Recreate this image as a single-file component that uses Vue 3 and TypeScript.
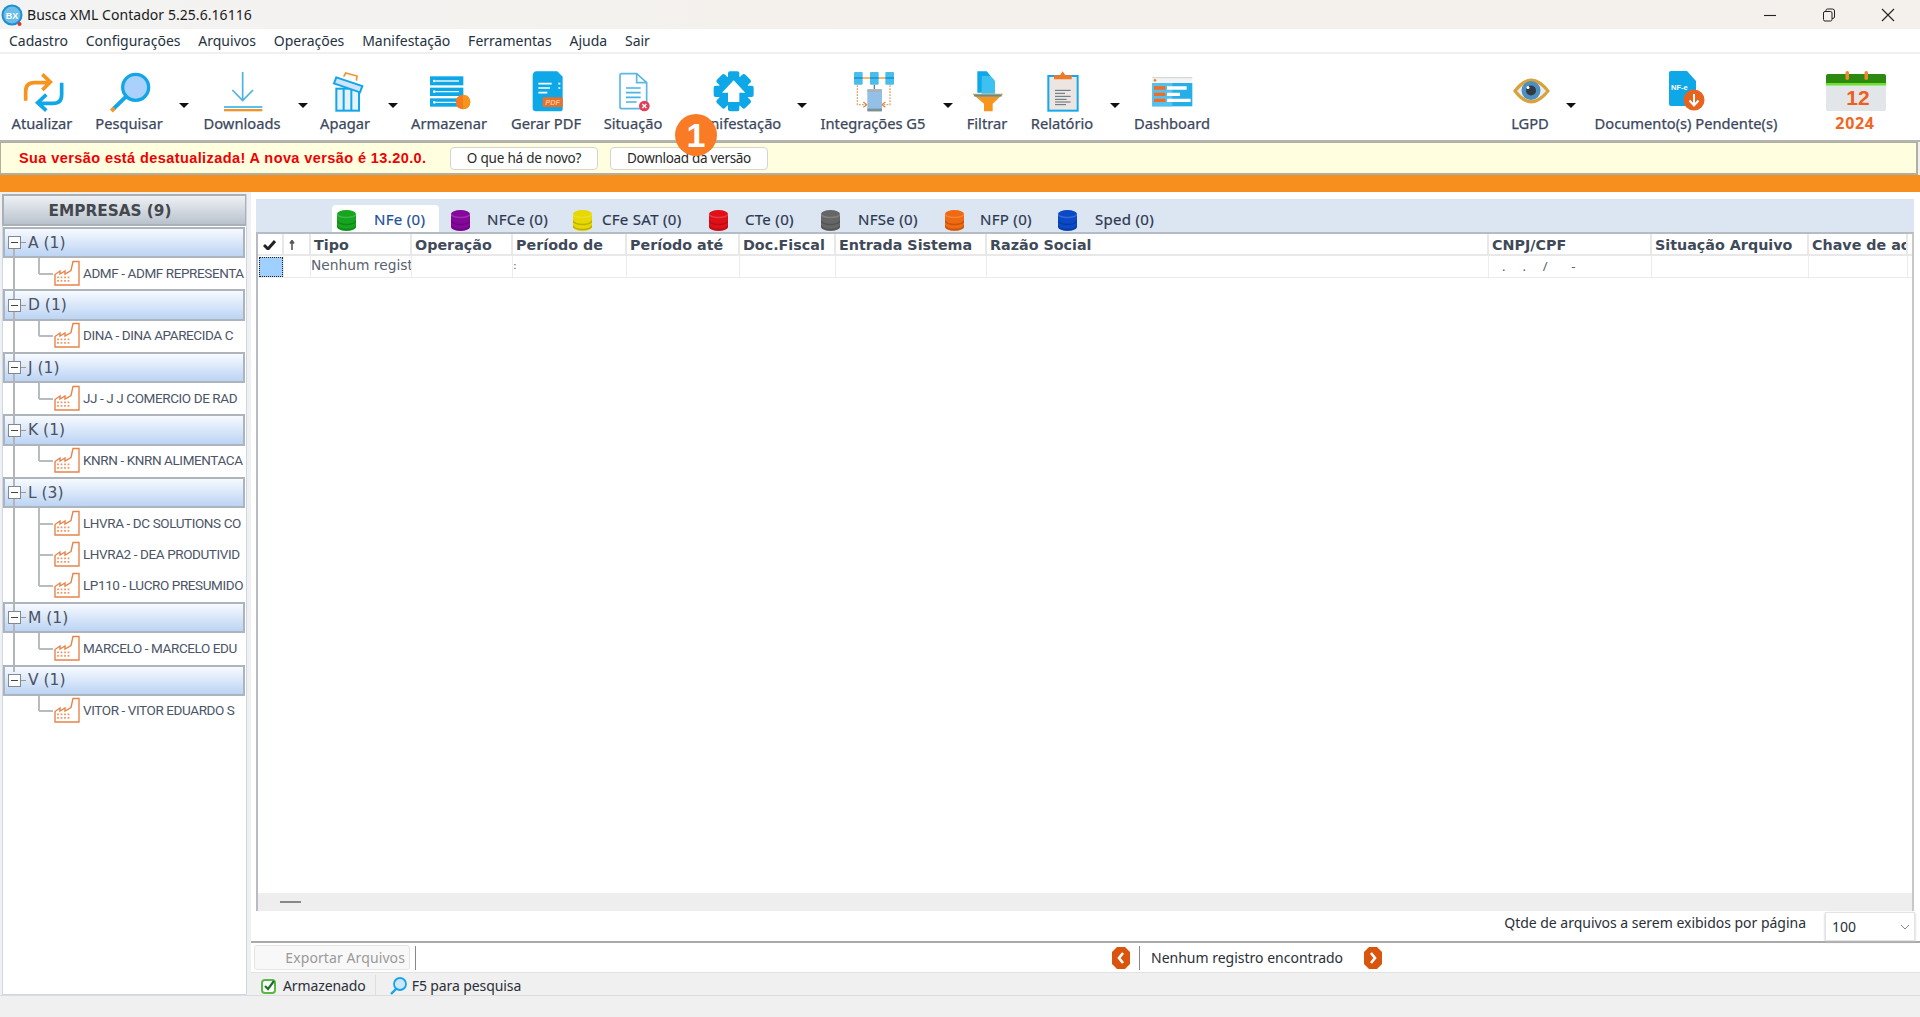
<script setup lang="ts">
interface Tool { id: string; label: string; w: number; ml: number; caret?: number; vb: string; sw: number }
const tools: Tool[] = [
  { id: 'sync', label: 'Atualizar', w: 70, ml: 0, vb: '12 18 138 138', sw: 46 },
  { id: 'search', label: 'Pesquisar', w: 80, ml: 12, caret: 10, vb: '252 18 180 138', sw: 60 },
  { id: 'down', label: 'Downloads', w: 84, ml: 11, caret: 14, vb: '591 18 180 138', sw: 60 },
  { id: 'trash', label: 'Apagar', w: 60, ml: 7, caret: 13, vb: '900 18 180 138', sw: 60 },
  { id: 'store', label: 'Armazenar', w: 84, ml: 9, vb: '1212 18 180 138', sw: 60 },
  { id: 'pdf', label: 'Gerar PDF', w: 80, ml: 15, vb: '-12 18 180 138', sw: 60 },
  { id: 'status', label: 'Situação', w: 64, ml: 15, vb: '249 18 180 138', sw: 60 },
  { id: 'gear', label: 'Manifestação', w: 110, ml: 15, caret: 7, vb: '555 18 180 138', sw: 60 },
  { id: 'integ', label: 'Integrações G5', w: 110, ml: 11, caret: 15, vb: '969 18 180 138', sw: 60 },
  { id: 'filter', label: 'Filtrar', w: 56, ml: 6, vb: '1317 18 168 138', sw: 56 },
  { id: 'report', label: 'Relatório', w: 76, ml: 9, caret: 10, vb: '6 18 180 138', sw: 60 },
  { id: 'dash', label: 'Dashboard', w: 84, ml: 10, vb: '336 18 180 138', sw: 60 },
]
const toolsRight: Tool[] = [
  { id: 'eye', label: 'LGPD', w: 50, ml: 0, caret: 11, vb: '1505 68 50 46', sw: 50 },
  { id: 'nfe', label: 'Documento(s) Pendente(s)', w: 190, ml: 15, vb: '1656 68 60 46', sw: 60 },
  { id: 'cal', label: '2024', w: 70, ml: 39, vb: '1820 68 70 46', sw: 70 },
]
const menu = ['Cadastro', 'Configurações', 'Arquivos', 'Operações', 'Manifestação', 'Ferramentas', 'Ajuda', 'Sair']
const tabs = [
  { label: 'NFe (0)', color: '#16a51f', w: 107, gap: 18, active: true },
  { label: 'NFCe (0)', color: '#85079c', w: 115, gap: 17 },
  { label: 'CFe SAT (0)', color: '#e6d800', w: 129, gap: 10 },
  { label: 'CTe (0)', color: '#e01018', w: 105, gap: 17 },
  { label: 'NFSe (0)', color: '#666666', w: 117, gap: 18 },
  { label: 'NFP (0)', color: '#ef6a10', w: 106, gap: 16 },
  { label: 'Sped (0)', color: '#0b49c8', w: 100, gap: 18 },
]
const cols = ['', '', 'Tipo', 'Operação', 'Período de', 'Período até', 'Doc.Fiscal', 'Entrada Sistema', 'Razão Social', 'CNPJ/CPF', 'Situação Arquivo', 'Chave de acesso']
const groups = [
  { label: 'A (1)', items: ['ADMF - ADMF REPRESENTA'] },
  { label: 'D (1)', items: ['DINA - DINA APARECIDA C'] },
  { label: 'J (1)', items: ['JJ - J J COMERCIO DE RAD'] },
  { label: 'K (1)', items: ['KNRN - KNRN ALIMENTACA'] },
  { label: 'L (3)', items: ['LHVRA - DC SOLUTIONS CO', 'LHVRA2 - DEA PRODUTIVID', 'LP110 - LUCRO PRESUMIDO'] },
  { label: 'M (1)', items: ['MARCELO - MARCELO EDU'] },
  { label: 'V (1)', items: ['VITOR - VITOR EDUARDO S'] },
]
const gearTeeth = [0, 45, 90, 135, 180, 225, 270, 315]
</script>

<template>
  <div class="app">
    <header class="title">
      <svg class="logo" width="22" height="24" viewBox="0 0 22 24">
        <circle cx="11" cy="12" r="10.5" fill="#1b8fd0" />
        <circle cx="11" cy="12" r="8.5" fill="#6cbde8" />
        <text x="11" y="15.5" text-anchor="middle" class="logo-t">BX</text>
        <circle cx="18.5" cy="21" r="2" fill="#d8362a" />
      </svg>
      <span class="title-text">Busca XML Contador 5.25.6.16116</span>
      <div class="win">
        <button class="win-btn"><svg width="14" height="14" viewBox="0 0 14 14"><path d="M1 7.5H13" stroke="#222" stroke-width="1.1" /></svg></button>
        <button class="win-btn"><svg width="14" height="14" viewBox="0 0 14 14"><rect x="1.5" y="3.5" width="8.5" height="9.5" rx="1.5" fill="none" stroke="#222" /><path d="M4 3.5V2.5Q4 1 5.5 1H10.5Q12.5 1 12.5 3V9Q12.5 10.5 10 10.5" fill="none" stroke="#222" /></svg></button>
        <button class="win-btn"><svg width="14" height="14" viewBox="0 0 14 14"><path d="M1 1L13 13M13 1L1 13" stroke="#222" stroke-width="1.1" /></svg></button>
      </div>
    </header>

    <nav class="menu">
      <span v-for="m in menu" :key="m" class="menu-item">{{ m }}</span>
    </nav>

    <div class="toolbar">
      <template v-for="t in tools" :key="t.id">
        <div class="tool" :style="{ width: t.w + 'px', marginLeft: t.ml + 'px' }">
          <svg class="tool-ic" :width="t.sw" height="46" :viewBox="t.vb">
            <g v-if="t.id === 'sync'" fill="none" stroke-width="11">
              <path d="M32 116V88Q32 62 58 62H104M82 37L106 60L82 84" stroke="#f7941d" />
              <path d="M140 62V98Q140 124 114 124H70M94 98L68 122L94 146" stroke="#0ea7e8" />
            </g>
            <g v-else-if="t.id === 'search'">
              <path d="M333 104L296 140" stroke="#12a5e8" stroke-width="12" />
              <path d="M298 138L289 147" stroke="#f0952b" stroke-width="12" />
              <circle cx="362" cy="76" r="39" fill="#a9d1fa" stroke="#12a5e8" stroke-width="10" />
            </g>
            <g v-else-if="t.id === 'down'">
              <path d="M683 30V118M652 84L683 116L714 84" fill="none" stroke="#4ab3e6" stroke-width="5" />
              <rect x="627" y="132" width="115" height="6" fill="#56c0ee" />
              <rect x="627" y="141" width="115" height="7" fill="#f0952b" />
            </g>
            <g v-else-if="t.id === 'trash'">
              <path d="M986 44L992 33L1026 42L1024 56" fill="none" stroke="#f0952b" stroke-width="5" />
              <rect x="964" y="80" width="68" height="66" fill="#e4f2fc" stroke="#12a5e8" stroke-width="6" />
              <path d="M986 80V146M1009 80V146" stroke="#12a5e8" stroke-width="6" />
              <path d="M964 46L1042 72L1035 91L957 64Z" fill="#cfe4f6" stroke="#12a5e8" stroke-width="6" />
            </g>
            <g v-else-if="t.id === 'store'">
              <rect x="1245" y="43" width="100" height="27" fill="#0ea7e8" />
              <rect x="1245" y="77" width="100" height="25" fill="#0ea7e8" />
              <rect x="1245" y="109" width="100" height="25" fill="#0ea7e8" />
              <path d="M1262 57H1332M1262 89H1332M1262 121H1332" stroke="#e8f5fc" stroke-width="4" />
              <circle cx="1258" cy="57" r="4" fill="#fff" /><circle cx="1258" cy="89" r="4" fill="#fff" /><circle cx="1258" cy="121" r="4" fill="#fff" />
              <circle cx="1344" cy="120" r="22" fill="#f47b20" />
              <path d="M1344 98A22 22 0 0 1 1344 142Z" fill="#f7941d" />
            </g>
            <g v-else-if="t.id === 'pdf'">
              <path d="M50 28H112L128 44V140Q128 148 120 148H48Q38 148 38 138V42Q38 28 50 28Z" fill="#0ea7e8" />
              <path d="M55 65H95M55 78H90M55 92H82M115 65H121M115 78H121" stroke="#fff" stroke-width="5" />
              <rect x="68" y="106" width="60" height="29" fill="#e8702a" />
              <text x="98" y="128" text-anchor="middle" class="pdf-t">PDF</text>
            </g>
            <g v-else-if="t.id === 'status'">
              <path d="M305 35H350L380 62V135Q380 140 375 140H305Q300 140 300 135V40Q300 35 305 35Z" fill="#fff" stroke="#5cb7e6" stroke-width="5" />
              <path d="M350 35V62H380" fill="none" stroke="#5cb7e6" stroke-width="5" />
              <path d="M318 78H362M318 92H362M318 106H362M318 120H350" stroke="#4ab3e6" stroke-width="5" />
              <circle cx="373" cy="132" r="16" fill="#e0405a" />
              <path d="M367 126L379 138M379 126L367 138" stroke="#fff" stroke-width="4" />
            </g>
            <g v-else-if="t.id === 'gear'">
              <rect v-for="a in gearTeeth" :key="a" x="624" y="28" width="34" height="30" rx="6" fill="#0ea7e8" :transform="`rotate(${a} 641 88)`" />
              <circle cx="641" cy="88" r="46" fill="#0ea7e8" />
              <path d="M641 55L676 92H658V120H624V92H606Z" fill="#fff" />
            </g>
            <g v-else-if="t.id === 'integ'">
              <path d="M1028 48H1096" stroke="#f7941d" stroke-width="4" />
              <path d="M1063 68V82" stroke="#777" stroke-width="4" />
              <rect x="1002" y="30" width="26" height="38" rx="3" fill="#4bbdec" />
              <rect x="1050" y="30" width="26" height="38" rx="3" fill="#4bbdec" />
              <rect x="1096" y="30" width="26" height="38" rx="3" fill="#4bbdec" />
              <path d="M1002 48H1028M1050 48H1076M1096 48H1122" stroke="#1592cf" stroke-width="5" />
              <path d="M1012 70V128H1038M1110 70V128H1088" fill="none" stroke="#e8a060" stroke-width="4" stroke-dasharray="5 4" />
              <path d="M1030 120L1040 128L1030 136M1096 120L1086 128L1096 136" fill="none" stroke="#e8873a" stroke-width="4" />
              <rect x="1042" y="82" width="44" height="66" rx="3" fill="#94bfe6" />
              <rect x="1042" y="82" width="44" height="8" fill="#a8b4b8" />
              <rect x="1042" y="140" width="44" height="8" fill="#7f9090" />
            </g>
            <g v-else-if="t.id === 'filter'">
              <path d="M1372 28H1400L1412 42V92H1372Z" fill="#0ea7e8" />
              <path d="M1385 42H1412L1425 56V95H1385Z" fill="#3ec0f0" />
              <path d="M1357 95H1450L1418 125V148H1392V125Z" fill="#f7941d" />
              <path d="M1362 101H1445" stroke="#2a9ad8" stroke-width="5" />
            </g>
            <g v-else-if="t.id === 'report'">
              <rect x="55" y="42" width="88" height="104" fill="#ece5e1" stroke="#14a8ec" stroke-width="6" />
              <path d="M72 52V40H90L98 28L106 40H125V52Z" fill="#f07a24" />
              <path d="M75 85H122M75 94H105M75 103H122M75 112H110M75 120H122M75 128H108" stroke="#5a6e7a" stroke-width="3" />
            </g>
            <g v-else-if="t.id === 'dash'">
              <rect x="367" y="46" width="120" height="17" fill="#f2f4f5" />
              <path d="M367 47H487" stroke="#b8c0c4" stroke-width="2" />
              <circle cx="375" cy="55" r="4" fill="#f58220" />
              <rect x="367" y="63" width="120" height="70" fill="#25aee8" />
              <rect x="367" y="63" width="60" height="70" fill="#55c0ee" />
              <path d="M372 73H406V83H372ZM372 92H406V102H372ZM372 110H406V120H372Z" fill="#f26b21" />
              <path d="M411 73H470V83H411ZM411 92H450V102H411ZM411 110H482V120H411Z" fill="#fff" />
            </g>
          </svg>
          <span class="tool-l">{{ t.label }}</span>
        </div>
        <i v-if="t.caret" class="caret" :style="{ marginLeft: t.caret + 'px' }"></i>
      </template>

      <div class="tools-right">
        <template v-for="t in toolsRight" :key="t.id">
          <div class="tool" :style="{ width: t.w + 'px', marginLeft: t.ml + 'px' }">
            <svg class="tool-ic" :width="t.sw" height="46" :viewBox="t.vb">
              <g v-if="t.id === 'eye'">
                <path d="M1513 91Q1531 66 1550 91Q1531 116 1513 91Z" fill="#d9a23a" />
                <path d="M1517 91Q1531 73 1546 91Q1531 109 1517 91Z" fill="#e8eef2" />
                <circle cx="1531" cy="90.5" r="9.5" fill="#4e8fbf" />
                <circle cx="1531" cy="90.5" r="5" fill="#2f3a44" />
                <circle cx="1528" cy="87.5" r="1.5" fill="#fff" />
              </g>
              <g v-else-if="t.id === 'nfe'">
                <path d="M1671 71H1687L1696 81V106H1671Q1669 106 1669 104V73Q1669 71 1671 71Z" fill="#0ea7e8" />
                <text x="1671" y="90" class="nfe-t">NF-e</text>
                <circle cx="1694" cy="100" r="10.5" fill="#e8641e" />
                <path d="M1694 94V105M1689.5 100.5L1694 105.5L1698.5 100.5" fill="none" stroke="#fff" stroke-width="2" />
              </g>
              <g v-else>
                <rect x="1826" y="74" width="60" height="37" rx="2" fill="#e2e6e8" />
                <path d="M1826 76Q1826 74 1828 74H1884Q1886 74 1886 76V85H1826Z" fill="#2d8a10" />
                <rect x="1826" y="83" width="60" height="2.5" fill="#6fe030" />
                <rect x="1845.5" y="71" width="3.5" height="9" rx="1.7" fill="#f0882a" />
                <rect x="1864.5" y="71" width="3.5" height="9" rx="1.7" fill="#f0882a" />
                <text x="1858" y="105" text-anchor="middle" class="cal-t">12</text>
              </g>
            </svg>
            <span class="tool-l" :class="{ year: t.id === 'cal' }">{{ t.label }}</span>
          </div>
          <i v-if="t.caret" class="caret" :style="{ marginLeft: t.caret + 'px' }"></i>
        </template>
      </div>
    </div>

    <div class="notice">
      <span class="notice-t">Sua versão está desatualizada! A nova versão é 13.20.0.</span>
      <button class="nbtn n1">O que há de novo?</button>
      <button class="nbtn n2">Download da versão</button>
    </div>
    <div class="orange"></div>

    <div class="body">
      <aside class="side">
        <div class="side-h">EMPRESAS (9)</div>
        <div class="tree">
          <template v-for="g in groups" :key="g.label">
            <div class="grp">
              <span class="exp"></span>
              <span class="grp-l">{{ g.label }}</span>
            </div>
            <div v-for="it in g.items" :key="it" class="row">
              <svg class="fac" width="26" height="26" viewBox="0 0 26 26">
                <path d="M1 25V14.5L6 11V14L11 11V14L17 10.5L19 1.5H25V25Z" fill="#fff" stroke="#e8834a" stroke-width="1.4" />
                <path d="M4 16.5V23M7.5 16.5V23M11 16.5V23M14.5 16.5V23" stroke="#ee9a68" stroke-width="1.8" stroke-dasharray="1.8 1.6" />
              </svg>
              <span class="row-t">{{ it }}</span>
            </div>
          </template>
        </div>
      </aside>

      <main class="main">
        <div class="tabs">
          <div v-for="t in tabs" :key="t.label" class="tab" :class="{ active: t.active }" :style="{ width: t.w + 'px', gap: t.gap + 'px' }">
            <svg width="19" height="21" viewBox="0 0 19 21">
              <path d="M0 4A9.5 4 0 0 1 19 4V17A9.5 4 0 0 1 0 17Z" :fill="t.color" />
              <path d="M0 4A9.5 3.6 0 0 0 19 4" fill="none" stroke="#fff" stroke-opacity=".18" stroke-width="1.5" />
              <path d="M0 10.5A9.5 4 0 0 0 19 10.5M0 15.5A9.5 4 0 0 0 19 15.5" fill="none" stroke="#000" stroke-opacity=".18" stroke-width="1.5" />
            </svg>
            <span class="tab-l">{{ t.label }}</span>
          </div>
        </div>

        <div class="grid">
          <div class="g-row g-head">
            <div v-for="(c, i) in cols" :key="i" class="g-c">
              <svg v-if="i === 0" width="13" height="10" viewBox="0 0 13 10"><path d="M1 5L5 9L12 1" fill="none" stroke="#222" stroke-width="3" /></svg>
              <svg v-else-if="i === 1" width="6" height="10" viewBox="0 0 6 10"><path d="M3 10V2M1 3.5L3 .5L5 3.5" fill="none" stroke="#555" stroke-width="1.6" /></svg>
              <template v-else>{{ c }}</template>
            </div>
          </div>
          <div class="g-row g-data">
            <div class="g-c"><span class="sel"></span></div>
            <div class="g-c"></div>
            <div class="g-c">Nenhum registro</div>
            <div class="g-c"></div>
            <div class="g-c colon">:</div>
            <div class="g-c"></div>
            <div class="g-c"></div>
            <div class="g-c"></div>
            <div class="g-c"></div>
            <div class="g-c cnpj">.&nbsp;&nbsp;&nbsp;&nbsp;&nbsp;.&nbsp;&nbsp;&nbsp;&nbsp;&nbsp;/&nbsp;&nbsp;&nbsp;&nbsp;&nbsp;&nbsp;&nbsp;-</div>
            <div class="g-c"></div>
            <div class="g-c"></div>
          </div>
          <div class="g-space"></div>
          <div class="hscroll"><i class="thumb"></i></div>
        </div>

        <div class="pagesize">
          <span>Qtde de arquivos a serem exibidos por página</span>
          <div class="select">
            <span>100</span>
            <svg width="10" height="6" viewBox="0 0 10 6"><path d="M1 1L5 5L9 1" fill="none" stroke="#888" /></svg>
          </div>
        </div>

        <div class="actions">
          <button class="export">Exportar Arquivos</button>
          <i class="vsep"></i>
          <div class="pager">
            <svg width="18" height="22" viewBox="0 0 18 22"><path d="M5 0H13L18 5V17L13 22H5L0 17V5Z" fill="#d9550e" /><path d="M11 6L7 11L11 16" fill="none" stroke="#fff" stroke-width="2.6" /></svg>
            <i class="vsep psep"></i>
            <span class="p-t">Nenhum registro encontrado</span>
            <svg width="18" height="22" viewBox="0 0 18 22"><path d="M5 0H13L18 5V17L13 22H5L0 17V5Z" fill="#d9550e" /><path d="M7 6L11 11L7 16" fill="none" stroke="#fff" stroke-width="2.6" /></svg>
          </div>
        </div>

        <div class="status">
          <svg width="18" height="18" viewBox="0 0 18 18"><rect x="2" y="3" width="13" height="13" rx="3" fill="#fff" stroke="#57b848" stroke-width="2" /><path d="M5 9L8 12L14 4" fill="none" stroke="#1f6f2a" stroke-width="2.2" /></svg>
          <span class="st-l">Armazenado</span>
          <i class="st-sep"></i>
          <svg width="18" height="20" viewBox="0 0 18 20"><path d="M7 13L2 18" stroke="#12a5e8" stroke-width="2.4" /><circle cx="11" cy="8" r="6" fill="#cfe5fb" stroke="#12a5e8" stroke-width="1.8" /></svg>
          <span class="st-l">F5 para pesquisa</span>
        </div>
      </main>
    </div>
    <footer class="foot"></footer>

    <div class="badge">1</div>
  </div>
</template>

<style>
html, body { margin: 0; background: #fff; }
</style>

<style scoped>
.app {
  position: relative;
  width: 1920px;
  height: 1017px;
  overflow: hidden;
  display: flex;
  flex-direction: column;
  background: #f0f0f0;
  font-family: "Noto Sans", "Open Sans", sans-serif;
  color: #222;
}
button { font-family: inherit; }
.title {
  height: 29px;
  flex: none;
  display: flex;
  align-items: center;
  padding-left: 1px;
  background: linear-gradient(90deg, #f3f3f3, #f4f1ec 45%);
}
.logo-t { font: bold 9px "Liberation Sans", sans-serif; fill: #fff; }
.title-text { margin-left: 4px; font-size: 14px; letter-spacing: .05px; color: #1a1a1a; }
.win { margin-left: auto; display: flex; padding-right: 3px; }
.win-btn { width: 59px; height: 29px; border: 0; background: none; padding: 0; display: flex; align-items: center; justify-content: center; }
.menu {
  height: 23px;
  flex: none;
  background: #fff;
  display: flex;
  align-items: center;
  padding-left: 9px;
  gap: 17.8px;
  border-bottom: 2px solid #f0f0f0;
  font-size: 14px;
  letter-spacing: 0;
  color: #26323f;
}
.toolbar {
  flex: none;
  display: flex;
  padding: 14px 30px 0 7px;
  background: #fff;
  border-bottom: 2px solid #b4b4b4;
  height: 72px;
}
.tools-right { margin-left: auto; display: flex; }
.tool { display: flex; flex-direction: column; align-items: center; flex: none; }
.tool-ic { display: block; height: 46px; flex: none; overflow: visible; }
.tool-l { margin-top: -1px; line-height: 20px; font-size: 14.7px; letter-spacing: 0; -webkit-text-stroke: .25px #3b475c; color: #3b475c; white-space: nowrap; }
.year { font-weight: 700; font-size: 16px; letter-spacing: .7px; color: #f26522; -webkit-text-stroke: 0; }
.pdf-t { font: italic bold 22px "Liberation Sans", sans-serif; fill: #f9c199; }
.nfe-t { font: bold 7.5px "Liberation Sans", sans-serif; fill: #fff; }
.cal-t { font: bold 21px "Liberation Sans", sans-serif; fill: #ee5f1f; }
.caret {
  flex: none;
  width: 0;
  height: 0;
  margin-top: 35px;
  border-left: 5px solid transparent;
  border-right: 5px solid transparent;
  border-top: 5px solid #111;
}
.notice {
  height: 30px;
  flex: none;
  display: flex;
  align-items: center;
  margin-right: 2px;
  background: #ffffe0;
  border: 1px solid #b0b0a0;
  border-width: 1px 2px 2px 1px;
}
.notice-t { margin-left: 18px; width: 431px; flex: none; font: bold 14.5px "Liberation Sans", sans-serif; letter-spacing: .41px; color: #f00000; white-space: nowrap; }
.nbtn {
  height: 23px;
  flex: none;
  padding: 0;
  border: 1px solid #d4d4d4;
  border-radius: 4px;
  background: #fff;
  font-size: 13.5px;
  letter-spacing: -.2px;
  color: #2a2a2a;
}
.n1 { width: 148px; }
.n2 { width: 158px; margin-left: 12px; letter-spacing: -.3px; }
.orange { height: 17px; flex: none; background: #f78f1e; }
.body { flex: 1; min-height: 0; display: flex; }
.side {
  width: 245px;
  flex: none;
  margin: 2px 0 0 2px;
  display: flex;
  flex-direction: column;
  background: #fff;
  border-left: 1px solid #c9d8ea;
  border-right: 1px solid #c9d8ea;
  border-bottom: 1px solid #c9d8ea;
  box-sizing: border-box;
}
.side-h {
  height: 32px;
  flex: none;
  box-sizing: border-box;
  display: flex;
  align-items: center;
  justify-content: center;
  padding: 2px 29px 0 0;
  background: linear-gradient(#eef1f5, #b9c2cc);
  border: 2px solid #a9b0b8;
  border-right-width: 1px;
  margin-left: -1px;
  font: bold 15.3px "DejaVu Sans", sans-serif;
  color: #44474d;
}
.tree { position: relative; flex: 1; margin-top: 1px; }
.tree::before {
  content: "";
  position: absolute;
  z-index: 1;
  left: 10px;
  top: 20px;
  height: 425px;
  width: 2px;
  background: #b2b6bb;
}
.grp {
  height: 31.2px;
  box-sizing: border-box;
  display: flex;
  align-items: center;
  border: 2px solid #aeb4bb;
  margin-right: 1px;
  background: linear-gradient(#f7faff, #bcd4f4);
}
.exp {
  position: relative;
  z-index: 2;
  width: 13px;
  height: 13px;
  margin-left: 3px;
  box-sizing: border-box;
  border: 1px solid #808890;
  background: #fff;
}
.exp::before { content: ""; position: absolute; left: 2px; right: 2px; top: 5px; height: 1px; background: #444; }
.exp::after { content: ""; position: absolute; left: 12px; top: 5px; width: 5px; height: 1px; background: #999; }
.grp-l { margin-left: 7px; font: 15.5px "DejaVu Sans", sans-serif; color: #4a5264; }
.row {
  position: relative;
  height: 31.3px;
  box-sizing: border-box;
  display: flex;
  align-items: center;
  padding: 0 0 2px 51px;
  overflow: hidden;
}
.row::before { content: ""; position: absolute; left: 35px; top: 0; bottom: 0; width: 2px; background: #b8bcc0; }
.row:has(+ .grp)::before, .row:last-child::before { bottom: 50%; }
.row::after { content: ""; position: absolute; left: 36px; top: 50%; margin-top: -1px; width: 14px; height: 2px; background: #b8bcc0; }
.fac { flex: none; }
.row-t { margin-left: 3px; font: 13.5px Roboto, "Noto Sans", sans-serif; letter-spacing: -.4px; color: #4c5568; white-space: nowrap; }
.main { flex: 1; min-width: 0; margin-left: 4px; display: flex; flex-direction: column; background: #fff; }
.tabs {
  height: 33px;
  flex: none;
  display: flex;
  align-items: flex-end;
  margin: 7px 6px 0 5px;
  padding-left: 76px;
  background: #dce6f2;
}
.tab {
  flex: none;
  height: 27px;
  box-sizing: border-box;
  margin-right: 7px;
  padding: 5px 0 0 5px;
  display: flex;
  align-items: flex-start;
  border-radius: 4px 4px 0 0;
}
.tab.active { background: #fff; }
.tab svg { flex: none; }
.tab-l { margin-top: -1px; font-size: 15px; letter-spacing: .3px; line-height: 20px; -webkit-text-stroke: .2px #2c3850; color: #2c3850; white-space: nowrap; }
.active .tab-l { color: #1d4f9c; -webkit-text-stroke: .2px #1d4f9c; }
.grid {
  flex: 1;
  min-height: 0;
  margin: 0 6px 0 5px;
  display: flex;
  flex-direction: column;
  border-top: 2px solid #b6bcc4;
  border-left: 2px solid #b6bcc4;
  border-right: 2px solid #c8c8c8;
}
.g-row {
  display: grid;
  grid-template-columns: 26px 27px 101px 101px 114px 113px 96px 151px 502px 163px 157px 99px;
  flex: none;
  overflow: hidden;
}
.g-head { height: 20px; border-bottom: 2px solid #e8e8e8; }
.g-head .g-c {
  font: bold 14.3px/22px "DejaVu Sans", sans-serif;
  color: #3f4a59;
  padding-left: 3px;
  border-right: 2px solid #e8e8e8;
  white-space: nowrap;
  overflow: hidden;
  box-sizing: border-box;
  display: block;
}
.g-head .g-c:nth-child(1), .g-head .g-c:nth-child(2) { display: flex; align-items: center; padding: 2px 0 0 5px; }
.g-data { height: 21px; border-bottom: 1px solid #ececec; }
.g-data .g-c {
  font: 13.8px/19px "DejaVu Sans", sans-serif;
  color: #5a6270;
  overflow: hidden;
  white-space: nowrap;
  border-right: 1px solid #ececec;
  box-sizing: border-box;
}
.sel {
  display: block;
  width: 24px;
  height: 20px;
  margin: 1px 0 0 1px;
  box-sizing: border-box;
  background: #9fd0ff;
  border: 1px dotted #222;
}
.colon { padding-left: 0; font-size: 11px !important; line-height: 20px !important; }
.cnpj { padding-left: 13px; font: 13px/21px "Noto Sans", sans-serif !important; }
.g-space { flex: 1; }
.hscroll { height: 18px; flex: none; background: #eeeeee; display: flex; align-items: center; padding-left: 22px; }
.thumb { width: 21px; height: 2px; background: #888; }
.pagesize {
  height: 30px;
  flex: none;
  display: flex;
  align-items: center;
  justify-content: flex-end;
  border-bottom: 2px solid #a9a9a9;
  font-size: 14px;
  letter-spacing: -.02px;
  color: #2a2f38;
}
.pagesize > span { margin: -8px 19px 0 0; }
.select {
  width: 90px;
  height: 29px;
  margin: 0 5px -1px 0;
  padding: 0 4px 0 6px;
  box-sizing: border-box;
  display: flex;
  align-items: center;
  justify-content: space-between;
  background: #fff;
  border: 1px solid #e4e4e4;
  box-shadow: 0 1px 2px #bbb;
  position: relative;
  z-index: 1;
}
.actions { height: 29px; flex: none; display: flex; align-items: center; border-bottom: 1px solid #e2e2e2; }
.export {
  width: 156px;
  height: 25px;
  margin-left: 3px;
  padding: 0 4px 0 0;
  text-align: right;
  border: 1px solid #e4e4e4;
  border-radius: 3px;
  background: #f8f8f8;
  font-size: 14px;
  letter-spacing: .1px;
  color: #9a9a9a;
}
.vsep { width: 1px; height: 24px; margin-left: 5px; background: #888; }
.pager { margin-left: 696px; display: flex; align-items: center; font-size: 14px; letter-spacing: 0; color: #2a2f38; }
.psep { margin-left: 9px; }
.p-t { margin: 0 21px 0 11px; }
.status {
  height: 22px;
  flex: none;
  box-sizing: border-box;
  display: flex;
  align-items: center;
  padding: 3px 0 0 9px;
  background: #f0f0f0;
  font-size: 14px;
  letter-spacing: -.1px;
  color: #2a2f38;
}
.st-l { margin-left: 5px; }
.st-sep { width: 1px; height: 22px; margin: 0 13px 0 9px; background: #dedede; }
.foot { height: 22px; flex: none; background: #f0f0f0; border-top: 1px solid #dcdcdc; box-sizing: border-box; }
.badge {
  position: absolute;
  z-index: 5;
  left: 675px;
  top: 114px;
  width: 42px;
  height: 42px;
  border-radius: 50%;
  background: #f97b26;
  color: #fff;
  display: flex;
  align-items: center;
  justify-content: center;
  font: bold 34px "Liberation Sans", sans-serif;
}
</style>
